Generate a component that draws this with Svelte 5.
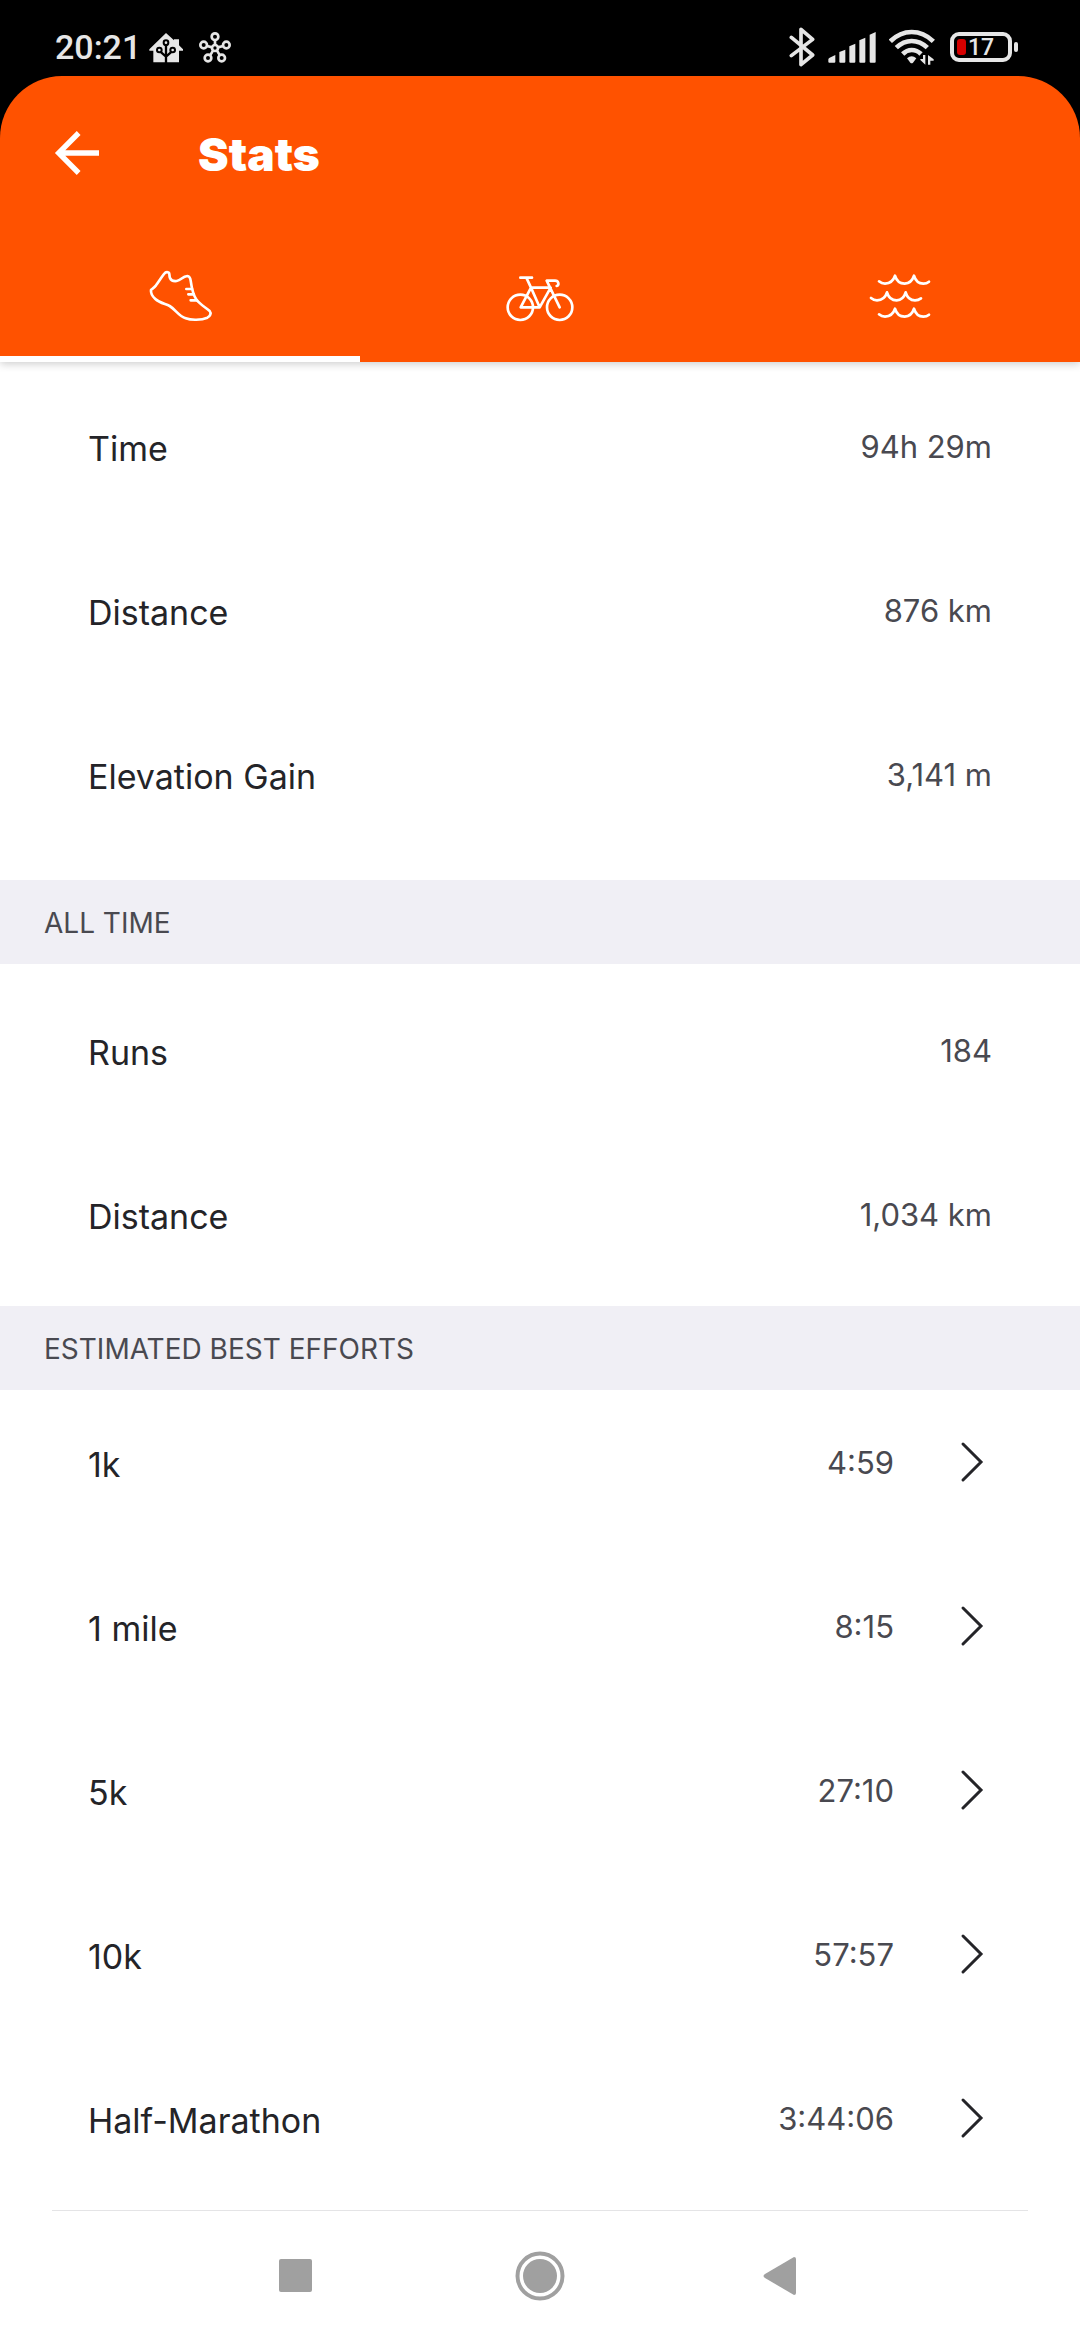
<script>
  const yearStats = [
    { label: 'Time', value: '94h 29m' },
    { label: 'Distance', value: '876 km' },
    { label: 'Elevation Gain', value: '3,141 m' }
  ];

  const allTimeStats = [
    { label: 'Runs', value: '184' },
    { label: 'Distance', value: '1,034 km' }
  ];

  const bestEfforts = [
    { label: '1k', value: '4:59' },
    { label: '1 mile', value: '8:15' },
    { label: '5k', value: '27:10' },
    { label: '10k', value: '57:57' },
    { label: 'Half-Marathon', value: '3:44:06' }
  ];

  const tabs = ['Run', 'Ride', 'Swim'];

  let activeTab = 'Run';
</script>

<div class="screen">
  <div class="status-bar">
    <div class="status-group">
      <span class="clock">20:21</span>
      <svg class="house" width="34" height="31" viewBox="0 0 102 93">
        <path d="M51 3 L75 25 V22 H90 V40 L102 52 V56 H90 V91 H13 V56 H1 V52 Z" fill="#e6e6e6" />
        <g fill="none" stroke="#000" stroke-width="6">
          <path d="M51 93 V40 M51 74 L33 58 M51 74 L69 58" stroke-width="7" />
          <circle cx="51" cy="32" r="7" fill="#e6e6e6" />
          <circle cx="31" cy="54" r="7" fill="#e6e6e6" />
          <circle cx="71" cy="54" r="7" fill="#e6e6e6" />
        </g>
      </svg>
      <svg class="hub" width="32" height="31" viewBox="0 0 96 93">
        <g fill="none" stroke="#e6e6e6" stroke-width="8">
          <circle cx="48" cy="48" r="9" />
          <circle cx="48" cy="14" r="10" />
          <circle cx="14" cy="39" r="10" />
          <circle cx="82" cy="39" r="10" />
          <circle cx="27" cy="78" r="10" />
          <circle cx="68" cy="78" r="10" />
          <path d="M48 24 V39 M24 42 L40 46 M73 42 L56 46 M33 71 L42 56 M63 71 L54 56" />
        </g>
      </svg>
    </div>
    <div class="status-group">
      <svg width="26" height="40" viewBox="0 0 78 120">
        <path d="M7 31 L71 84 L36 113 V7 L71 37 L7 86" fill="none" stroke="#e6e6e6" stroke-width="11" stroke-linecap="round" stroke-linejoin="round" />
      </svg>
      <svg class="signal" width="48" height="31" viewBox="0 0 144 93">
        <g fill="#e6e6e6">
          <path d="M1 83 Q1 79 5 77 L22 69 V89 Q22 92 19 92 H4 Q1 92 1 89 Z" />
          <path d="M34 60 L52 53 V89 Q52 92 49 92 H37 Q34 92 34 89 Z" />
          <path d="M64 43 L82 35 V89 Q82 92 79 92 H67 Q64 92 64 89 Z" />
          <path d="M94 25 L112 17 V89 Q112 92 109 92 H97 Q94 92 94 89 Z" />
          <path d="M125 8 L143 0 V89 Q143 92 140 92 H128 Q125 92 125 89 Z" />
        </g>
      </svg>
      <svg class="wifi" width="46" height="36" viewBox="0 0 138 108">
        <g fill="none" stroke="#e6e6e6" stroke-width="14">
          <path d="M4 37 Q32 9 68 9 Q104 9 133 37" />
          <path d="M22 56 Q43 36 68 36 Q94 36 115 56" />
          <path d="M41 75 Q53 63 68 63 Q84 63 96 75" />
        </g>
        <path d="M54 88 Q68 76 82 88 L72 101 Q68 105 64 101 Z" fill="#e6e6e6" />
        <path d="M109 78 V107 L94 93 V90 H102 V78 Z M117 107 V78 L134 91 V95 H124 V107 Z" fill="#e6e6e6" />
      </svg>
      <svg class="battery" width="70" height="32" viewBox="0 0 70 32">
        <rect x="3" y="3" width="58" height="26" rx="7" fill="none" stroke="#e6e6e6" stroke-width="4" />
        <rect x="65" y="11" width="4" height="10" rx="2" fill="#e6e6e6" />
        <rect x="8" y="8" width="9" height="16" rx="3" fill="#d50000" />
        <text x="19" y="24" font-size="23" font-weight="500" fill="#e6e6e6">17</text>
      </svg>
    </div>
  </div>

  <header class="header">
    <div class="toolbar">
      <button class="back" aria-label="Back">
        <svg width="46" height="46" viewBox="0 0 138 138">
          <path d="M74 9 L14 69 L74 129 M14 69 H135" fill="none" stroke="#fff" stroke-width="16" />
        </svg>
      </button>
      <h1>Stats</h1>
    </div>
    <div class="tabs" role="tablist">
      {#each tabs as tab}
        <button
          class="tab"
          class:active={tab === activeTab}
          role="tab"
          aria-label={tab}
          aria-selected={tab === activeTab}
          on:click={() => (activeTab = tab)}
        >
          <svg width="68" height="68" viewBox="78 66 204 204">
            {#if tab === 'Run'}
              <path d="M93 150 C100 144 104 141 108 136 C116 125 124 112 132 102 C136 97 141 95 146 98 C150 101 147 107 150 114 C153 122 161 124 170 123 C184 121 187 109 202 108 C210 109 211 114 212 122 C215 144 220 167 230 180 C242 195 258 203 269 213 C275 220 270 229 262 233 C244 241 213 241 197 235 C176 228 166 208 149 198 C134 191 119 189 106 177 C96 168 92 159 93 150 Z" />
              <path d="M199 147 H216 M205 163 H221 M212 181 H231" />
            {:else if tab === 'Ride'}
              <circle cx="121" cy="202" r="38" />
              <circle cx="239" cy="202" r="38" />
              <path d="M121 113 H156 M139 113 L153 143 L179 202 M153 143 L122 202 H179 L212 143 H153 M239 202 L200 122 H225 C236 122 239 136 230 138" />
            {:else}
              <path d="M117 124 Q125 131 135 131 Q158 130 165 107 Q172 131 194 131 Q215 130 222 107 Q229 131 250 131 Q260 131 267 125" />
              <path d="M93 174 Q101 181 111 181 Q134 180 141 157 Q148 181 170 181 Q190 180 197 157 Q204 181 225 181 Q235 181 243 175" />
              <path d="M117 223 Q125 230 135 230 Q158 229 165 206 Q172 230 194 230 Q215 229 222 206 Q229 230 250 230 Q260 230 267 224" />
            {/if}
          </svg>
        </button>
      {/each}
    </div>
  </header>

  <main>
    <ul class="list spaced">
      {#each yearStats as stat}
        <li class="row">
          <span class="label">{stat.label}</span>
          <span class="value">{stat.value}</span>
        </li>
      {/each}
    </ul>

    <h2>ALL TIME</h2>
    <ul class="list">
      {#each allTimeStats as stat}
        <li class="row">
          <span class="label">{stat.label}</span>
          <span class="value">{stat.value}</span>
        </li>
      {/each}
    </ul>

    <h2>ESTIMATED BEST EFFORTS</h2>
    <ul class="list efforts">
      {#each bestEfforts as effort}
        <li>
          <a class="row" href="#effort">
            <span class="label">{effort.label}</span>
            <span class="value">{effort.value}</span>
            <svg class="chevron" width="28" height="42" viewBox="0 0 28 42">
              <path d="M5 3 L23 21 L5 39" fill="none" stroke="#242428" stroke-width="3" stroke-linecap="round" />
            </svg>
          </a>
        </li>
      {/each}
    </ul>
  </main>

  <nav class="nav">
    <button aria-label="Recent apps">
      <svg width="60" height="60" viewBox="0 0 60 60">
        <rect x="11" y="13" width="33" height="33" rx="2" fill="#a0a0a0" />
      </svg>
    </button>
    <button aria-label="Home">
      <svg width="60" height="60" viewBox="0 0 60 60">
        <circle cx="30" cy="30" r="22.5" fill="none" stroke="#a0a0a0" stroke-width="4" />
        <circle cx="30" cy="30" r="17" fill="#a0a0a0" />
      </svg>
    </button>
    <button aria-label="Back">
      <svg width="60" height="60" viewBox="0 0 60 60">
        <path d="M13 28 L42 11 Q44 11 44 13 V47 Q44 49 42 49 L13 32 Q10 30 13 28 Z" fill="#a0a0a0" />
      </svg>
    </button>
  </nav>
</div>

<style>
  :global(body) {
    background-color: #000;
  }

  .screen {
    display: flex;
    flex-direction: column;
    min-height: 100vh;
    font-family: Inter, Roboto, sans-serif;
  }

  svg {
    display: block;
    flex: none;
  }

  button {
    display: flex;
    align-items: center;
    justify-content: center;
    padding: 0;
    border: none;
    background: none;
  }

  .status-bar {
    display: flex;
    justify-content: space-between;
    height: 76px;
    box-sizing: border-box;
    padding: 18px 61px 0 55px;
    font-family: Roboto, sans-serif;
    color: #e6e6e6;
  }

  .status-group {
    display: flex;
    align-items: center;
  }

  .clock {
    font-size: 34px;
    font-weight: 500;
    line-height: 40px;
  }

  .house {
    margin-left: 8px;
  }

  .hub {
    margin-left: 16px;
  }

  .signal {
    margin-left: 13px;
  }

  .wifi {
    margin-left: 13px;
  }

  .battery {
    margin-left: 14px;
  }

  .header {
    position: relative;
    border-radius: 62px 62px 0 0;
    background-color: #ff5200;
    color: #fff;
    box-shadow: 0 2px 8px rgba(0, 0, 0, 0.2);
  }

  .toolbar {
    display: flex;
    align-items: center;
    gap: 98px;
    height: 154px;
    padding: 0 54px;
  }

  h1 {
    margin: 0;
    padding-top: 2px;
    font-size: 46px;
    font-weight: 900;
    line-height: 56px;
  }

  .tabs {
    display: grid;
    grid-template-columns: repeat(3, 1fr);
  }

  .tab {
    height: 132px;
    box-sizing: border-box;
    border-top: 6px solid transparent;
    border-bottom: 6px solid transparent;
  }

  .tab.active {
    border-bottom-color: #fff;
  }

  .tab svg {
    fill: none;
    stroke: #fff;
    stroke-width: 8;
    stroke-linecap: round;
    stroke-linejoin: round;
  }

  main {
    background-color: #fff;
  }

  .list {
    margin: 0;
    padding: 14px 0 0;
    list-style: none;
  }

  .list.spaced {
    padding: 12px 0 14px;
  }

  .list.efforts {
    margin: 0 52px;
    padding: 0;
    border-bottom: 1px solid #e4e4e6;
  }

  .row {
    display: flex;
    align-items: center;
    height: 164px;
    box-sizing: border-box;
    padding: 0 88px 14px;
    text-decoration: none;
  }

  .efforts .row {
    padding: 0 42px 14px 36px;
  }

  .label {
    flex: 1;
    font-size: 34px;
    font-weight: 400;
    line-height: 40px;
    color: #242428;
  }

  .value {
    padding-bottom: 4px;
    font-size: 31px;
    font-weight: 400;
    line-height: 40px;
    color: #494950;
  }

  .chevron {
    margin-left: 64px;
    margin-bottom: 6px;
  }

  h2 {
    margin: 0;
    padding: 23px 44px 21px;
    background-color: #f0eff5;
    font-size: 28px;
    font-weight: 400;
    line-height: 40px;
    color: #494950;
  }

  .nav {
    display: grid;
    grid-template-columns: repeat(3, 242px);
    flex: 1;
    align-items: center;
    justify-content: center;
    min-height: 129px;
    background-color: #fff;
  }
</style>
